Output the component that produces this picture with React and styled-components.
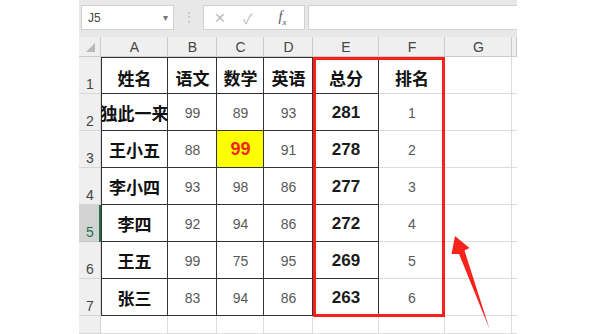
import React from "react";
import styled, { createGlobalStyle, css } from "styled-components";

const GlobalStyle = createGlobalStyle`
  html, body {
    margin: 0;
    background: #fff;
    overflow: hidden;
  }
`;

const COLUMNS = ["A", "B", "C", "D", "E", "F", "G"];
const HEADINGS = ["姓名", "语文", "数学", "英语", "总分", "排名"];
const STUDENTS = [
  ["独此一来", 99, 89, 93, 281, 1],
  ["王小五", 88, 99, 91, 278, 2],
  ["李小四", 93, 98, 86, 277, 3],
  ["李四", 92, 94, 86, 272, 4],
  ["王五", 99, 75, 95, 269, 5],
  ["张三", 83, 94, 86, 263, 6],
];
const SELECTED_ROW = 5;

const DARK = "#333";
const LIGHT = "#dcdcdc";

const App = () => (
  <Page>
    <GlobalStyle />
    <Workbook>
      <FormulaBar>
        <NameBox>
          <span>J5</span>
          <Caret>▾</Caret>
        </NameBox>
        <Grip>⋮</Grip>
        <FxGroup>
          <FxButton>✕</FxButton>
          <FxButton>✓</FxButton>
          <FxLabel>
            f<sub>x</sub>
          </FxLabel>
        </FxGroup>
        <FormulaInput />
      </FormulaBar>

      <Sheet>
        <Grid>
          <Corner>
            <CornerMark />
          </Corner>
          {COLUMNS.map((c) => (
            <ColHead key={c}>{c}</ColHead>
          ))}
          <ColHead />

          <RowHead>1</RowHead>
          {HEADINGS.map((h, i) => (
            <Cell
              key={h}
              $kind="head"
              $boxed={i < 5}
              $top
              $left={i === 0}
            >
              {h}
            </Cell>
          ))}
          <Cell />
          <Cell $last />

          {STUDENTS.map((s, r) => (
            <React.Fragment key={s[0]}>
              <RowHead $selected={r + 2 === SELECTED_ROW}>{r + 2}</RowHead>
              <Cell $kind="name" $boxed $left>
                {s[0]}
              </Cell>
              <Cell $kind="score" $boxed>
                {s[1]}
              </Cell>
              <Cell $kind={r === 1 ? "hot" : "score"} $boxed>
                {s[2]}
              </Cell>
              <Cell $kind="score" $boxed>
                {s[3]}
              </Cell>
              <Cell $kind="total" $boxed>
                {s[4]}
              </Cell>
              <Cell $kind="rank">{s[5]}</Cell>
              <Cell />
              <Cell $last />
            </React.Fragment>
          ))}

          <RowHead />
          {COLUMNS.map((c) => (
            <Cell key={c} />
          ))}
          <Cell $last />
        </Grid>

        {/* annotation layer, same tracks as the cells below it */}
        <Grid $overlay>
          <Highlight />
        </Grid>
      </Sheet>
    </Workbook>

    <Arrow viewBox="0 0 590 334">
      <polygon points="455,236 469.5,248 464.5,250.5 489.5,329 459,254 451.5,254" />
    </Arrow>
  </Page>
);

const Page = styled.div`
  position: relative;
  width: 590px;
  height: 334px;
  overflow: hidden;
  font-family: "Liberation Sans", Arial, "Noto Sans CJK SC", sans-serif;
`;

const Workbook = styled.div`
  margin-left: 79px;
  width: 438px;
  height: 334px;
  display: flex;
  flex-direction: column;
  background: #fff;
`;

const FormulaBar = styled.div`
  display: flex;
  align-items: flex-start;
  height: 37px;
  flex-shrink: 0;
  box-sizing: border-box;
  padding: 5px 0 0 2px;
  background: #e8e8e8;
`;

const WhiteBox = css`
  height: 25px;
  box-sizing: border-box;
  background: #fff;
  border: 1px solid #d0d0d0;
`;

const NameBox = styled.div`
  ${WhiteBox};
  width: 93px;
  display: flex;
  align-items: center;
  justify-content: space-between;
  padding: 0 5px 0 6px;
  font-size: 12px;
  color: #444;
`;

const Caret = styled.span`
  font-size: 10px;
  color: #777;
`;

const Grip = styled.span`
  width: 29px;
  text-align: center;
  line-height: 25px;
  font-size: 14px;
  color: #c4c4c4;
`;

const FxGroup = styled.div`
  ${WhiteBox};
  width: 102px;
  display: flex;
  align-items: center;
  padding-left: 10px;
  gap: 17px;
`;

const FxButton = styled.span`
  font-size: 14px;
  color: #b8b8b8;
`;

const FxLabel = styled.span`
  margin-left: 9px;
  font-family: "Liberation Serif", serif;
  font-style: italic;
  font-size: 14px;
  color: #555;

  sub {
    font-size: 9px;
  }
`;

const FormulaInput = styled.div`
  ${WhiteBox};
  flex: 1;
  margin-left: 3px;
  border-right: none;
`;

const Sheet = styled.div`
  flex: 1;
  display: grid;
  overflow: hidden;
`;

const Grid = styled.div`
  grid-area: 1 / 1;
  display: grid;
  grid-template-columns: 22px 67px 49px 47px 49px 66px 66px 67px 5px;
  grid-template-rows: 20px repeat(7, 37px) 1fr;
  ${(p) => p.$overlay && "pointer-events: none;"}
`;

const HeadBase = css`
  background: #efefef;
  box-sizing: border-box;
  color: #444;
  font-size: 14px;
  display: flex;
`;

const Corner = styled.div`
  ${HeadBase};
  box-shadow: inset -1px -1px 0 #cbcbcb;
  align-items: flex-end;
  justify-content: flex-end;
  padding: 0 6px 5px 0;
`;

const CornerMark = styled.div`
  width: 0;
  height: 0;
  border-left: 9px solid transparent;
  border-bottom: 9px solid #b9b9b9;
`;

const ColHead = styled.div`
  ${HeadBase};
  box-shadow: inset -1px -1px 0 #cbcbcb;
  align-items: center;
  justify-content: center;
`;

const RowHead = styled.div`
  ${HeadBase};
  align-items: flex-end;
  padding: 0 0 2px 7px;
  box-shadow: inset -1px -1px 0 #d6d6d6;

  ${(p) =>
    p.$selected &&
    css`
      background: #d3d3d3;
      color: #217346;
      box-shadow: inset -2px 0 0 #217346, inset 0 -1px 0 #c4c4c4;
    `}
`;

const kinds = {
  head: css`
    font-family: "Noto Sans CJK SC", sans-serif;
    font-weight: 700;
    font-size: 17px;
    color: #111;
    padding-top: 3px;
  `,
  name: css`
    font-family: "Noto Sans CJK SC", sans-serif;
    font-weight: 700;
    font-size: 17px;
    color: #111;
  `,
  score: css`
    font-size: 14px;
    color: #585858;
  `,
  rank: css`
    font-size: 14px;
    color: #585858;
  `,
  total: css`
    font-size: 17px;
    font-weight: 700;
    color: #1a1a1a;
  `,
  hot: css`
    font-size: 18px;
    font-weight: 700;
    color: #f2271c;
    background: #ffff00;
  `,
};

const Cell = styled.div`
  box-sizing: border-box;
  display: flex;
  align-items: center;
  justify-content: center;
  white-space: nowrap;
  overflow: hidden;
  background: #fff;
  box-shadow: ${(p) =>
    [
      `inset -1px 0 0 ${p.$boxed ? DARK : p.$last ? "transparent" : LIGHT}`,
      `inset 0 -1px 0 ${p.$boxed ? DARK : LIGHT}`,
      p.$top && `inset 0 1px 0 ${DARK}`,
      p.$left && `inset 1px 0 0 ${DARK}`,
    ]
      .filter(Boolean)
      .join(", ")};
  ${(p) => p.$kind && kinds[p.$kind]};
`;

const Highlight = styled.div`
  grid-column: 6 / 8;
  grid-row: 2 / 9;
  border: 3px solid #fb1f1c;
  margin-bottom: -1px;
`;

const Arrow = styled.svg`
  position: absolute;
  inset: 0;
  width: 590px;
  height: 334px;
  pointer-events: none;

  polygon {
    fill: #f5231b;
  }
`;

export default App;
